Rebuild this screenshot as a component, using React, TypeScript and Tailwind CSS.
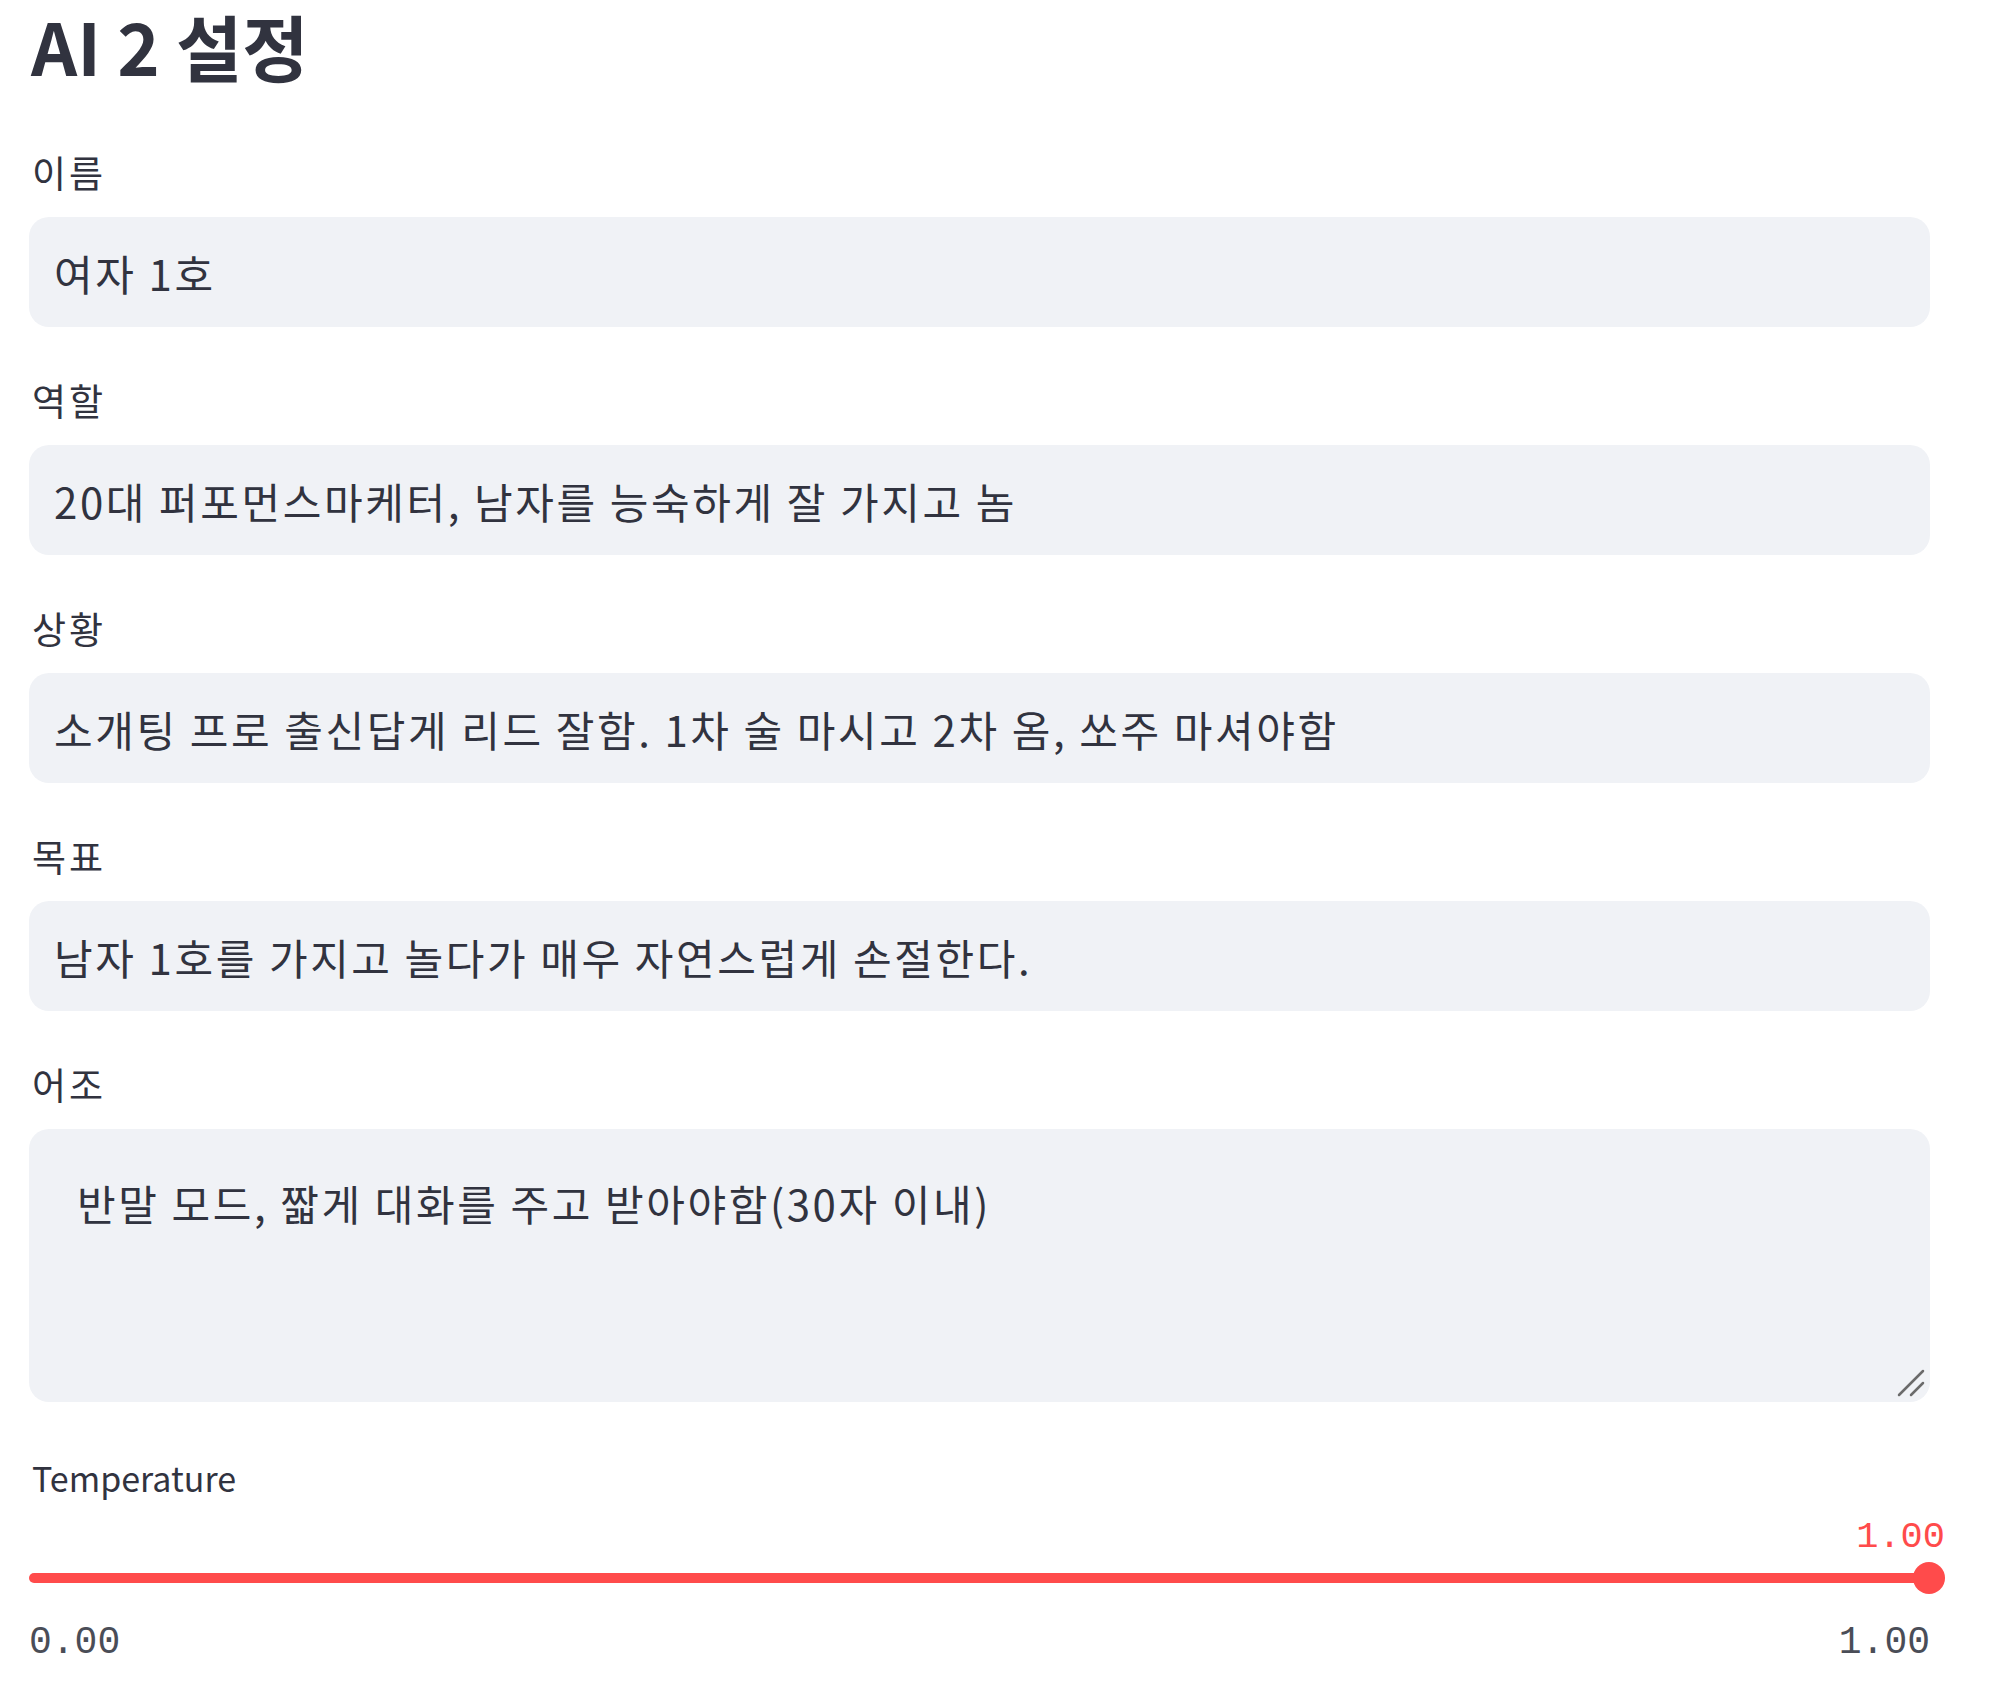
import React from "react";

const FIELDS = [
  { label: "이름", value: "여자 1호" },
  { label: "역할", value: "20대 퍼포먼스마케터, 남자를 능숙하게 잘 가지고 놈" },
  { label: "상황", value: "소개팅 프로 출신답게 리드 잘함. 1차 술 마시고 2차 옴, 쏘주 마셔야함" },
  { label: "목표", value: "남자 1호를 가지고 놀다가 매우 자연스럽게 손절한다." },
];

function FieldLabel({ children }: { children: React.ReactNode }) {
  return (
    <div className="h-[90px] flex items-center text-[37px] tracking-[3px] leading-none pl-[3px]">
      {children}
    </div>
  );
}

export default function App() {
  return (
    <div className="min-h-[1705px] bg-white text-[#31333f] font-['Noto_Sans_CJK_KR','Noto_Sans',sans-serif]">
      <div className="w-[1901px] ml-[29px] flex flex-col">
        {/* 제목 */}
        <div className="h-[127px] pb-[36px] flex items-center pl-[2px]">
          <h2 className="text-[72px] font-bold leading-[1.2]">AI 2 설정</h2>
        </div>

        {/* 입력 필드 */}
        <div className="flex flex-col gap-[28px]">
          {FIELDS.map((f) => (
            <div key={f.label} className="flex flex-col">
              <FieldLabel>{f.label}</FieldLabel>
              <input
                readOnly
                defaultValue={f.value}
                className="h-[110px] w-full rounded-[20px] bg-[#f0f2f6] px-[25px] text-[42px] tracking-[2.6px] text-[#31333f] outline-none"
              />
            </div>
          ))}

          <div className="flex flex-col">
            <FieldLabel>어조</FieldLabel>
            <div className="relative">
              <textarea
                readOnly
                defaultValue="반말 모드, 짧게 대화를 주고 받아야함(30자 이내)"
                className="block h-[273px] w-full resize-none rounded-[20px] bg-[#f0f2f6] pt-[40px] pl-[48px] pr-[25px] text-[42px] tracking-[2.6px] leading-[1.6] text-[#31333f] outline-none"
              />
              <svg
                className="absolute right-[4px] bottom-[4px] w-[30px] h-[30px]"
                viewBox="0 0 30 30"
                fill="none"
              >
                <path d="M27 3 L3 27" stroke="#6b6b6b" strokeWidth="2.5" strokeLinecap="round" />
                <path d="M27 15 L15 27" stroke="#6b6b6b" strokeWidth="2.5" strokeLinecap="round" />
              </svg>
            </div>
          </div>
        </div>

        {/* Temperature 슬라이더 */}
        <div className="mt-[46px] h-[60px] flex items-center text-[34px] leading-none pl-[3px]">
          Temperature
        </div>
        <div className="h-[58px] flex items-center justify-end -mr-[15px] font-['Liberation_Mono',monospace] text-[37px] leading-none text-[#ff4b4b]">
          1.00
        </div>
        <div className="relative h-[24px] flex items-center">
          <div className="h-[10px] w-full rounded-full bg-[#ff4b4b]" />
          <div className="absolute right-[-15px] top-1/2 -translate-y-1/2 w-[32px] h-[32px] rounded-full bg-[#ff4b4b]" />
        </div>
        <div className="h-[106px] flex items-center justify-between font-['Liberation_Mono',monospace] text-[38px] leading-none text-[#4a4d57]">
          <span>0.00</span>
          <span>1.00</span>
        </div>
      </div>
    </div>
  );
}
